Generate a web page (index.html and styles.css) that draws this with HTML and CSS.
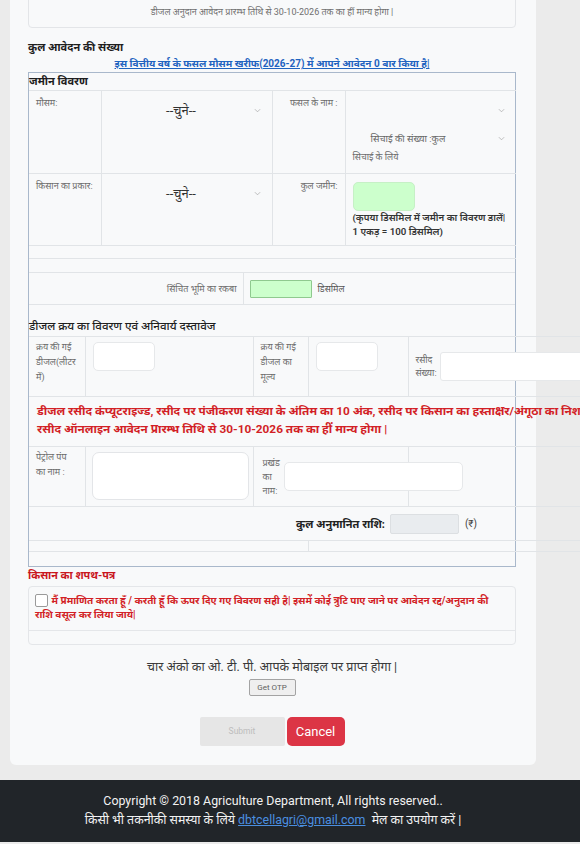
FILE: index.html
```html
<!DOCTYPE html>
<html lang="hi">
<head>
<meta charset="utf-8">
<title>डीजल अनुदान आवेदन</title>
<link rel="stylesheet" href="styles.css">
</head>
<body>
<main class="card">
  <div class="notice">डीजल अनुदान आवेदन प्रारम्भ तिथि से 30-10-2026 तक का हीं मान्य होगा |</div>

  <h4 class="count-title">कुल आवेदन की संख्या</h4>
  <p class="count-link"><a href="#">इस वित्तीय वर्ष के फसल मौसम खरीफ(2026-27) में आपने आवेदन 0 बार किया है|</a></p>

  <section class="land-box">
    <h5 class="sec-title">जमीन विवरण</h5>
    <table class="grid land">
      <colgroup><col class="c-lbl"><col class="c-val"><col class="c-lbl2"><col class="c-val"></colgroup>
      <tr class="r-season">
        <td class="lbl">मौसम:</td>
        <td class="sel-cell">
          <div class="select big"><span>--चुने--</span><svg class="chev" viewBox="0 0 8 5"><path d="M1 1l3 3 3-3"/></svg></div>
        </td>
        <td class="lbl right">फसल के नाम :</td>
        <td class="sel-cell">
          <div class="select big"><span></span><svg class="chev" viewBox="0 0 8 5"><path d="M1 1l3 3 3-3"/></svg></div>
          <div class="select small"><span>सिचाई की संख्या :कुल</span><svg class="chev" viewBox="0 0 8 5"><path d="M1 1l3 3 3-3"/></svg></div>
          <div class="hint">सिचाई के लिये</div>
        </td>
      </tr>
      <tr class="r-farmer">
        <td class="lbl">किसान का प्रकार:</td>
        <td class="sel-cell">
          <div class="select big"><span>--चुने--</span><svg class="chev" viewBox="0 0 8 5"><path d="M1 1l3 3 3-3"/></svg></div>
        </td>
        <td class="lbl right">कुल जमीन:</td>
        <td class="land-cell">
          <input class="green-in tall" type="text">
          <p class="land-note">(कृपया डिसमिल में जमीन का विवरण डालें|<br>1 एकड़ = 100 डिसमिल)</p>
        </td>
      </tr>
      <tr class="blank"><td colspan="4"></td></tr>
    </table>

    <table class="grid irrig">
      <colgroup><col class="c-irr"><col></colgroup>
      <tr class="blank b2"><td colspan="2"></td></tr>
      <tr class="r-irr">
        <td class="lbl right mid">सिंचित भूमि का रकबा</td>
        <td class="mid"><div class="inline-field"><input class="green-in short" type="text"><span class="unit">डिसमिल</span></div></td>
      </tr>
    </table>

    <h5 class="sec-title plain">डीजल क्रय का विवरण एवं अनिवार्य दस्तावेज</h5>
    <table class="grid diesel">
      <colgroup><col class="d1"><col class="d2"><col class="d3"><col class="d4"><col class="d5"></colgroup>
      <tr class="r-buy">
        <td class="lbl lbl3">क्रय की गई डीजल(लीटर में)</td>
        <td class="in-cell"><input class="white-in" type="text"></td>
        <td class="lbl lbl3">क्रय की गई डीजल का मूल्य</td>
        <td class="in-cell"><input class="white-in" type="text"></td>
        <td class="mid"><div class="receipt"><span class="rc-lbl">रसीद संख्या:</span><input class="white-in wide" type="text"></div></td>
      </tr>
      <tr class="r-warn">
        <td colspan="5" class="warn">डीजल रसीद कंप्यूटराइज्ड, रसीद पर पंजीकरण संख्या के अंतिम का 10 अंक, रसीद पर किसान का हस्ताक्षर/अंगूठा का निशान अनिवार्य है तथा डीजल<br>रसीद ऑनलाइन आवेदन प्रारम्भ तिथि से 30-10-2026 तक का हीं मान्य होगा |</td>
      </tr>
      <tr class="r-pump">
        <td class="lbl lbl3 narrow">पेट्रोल पंप का नाम :</td>
        <td class="in-cell"><textarea class="pump-area"></textarea></td>
        <td colspan="2" class="mid"><div class="block-field"><span class="blk-lbl">प्रखंड का नाम:</span><input class="white-in blk-in" type="text"></div></td>
        <td></td>
      </tr>
      <tr class="r-total">
        <td colspan="5" class="mid">
          <div class="total"><span class="total-lbl">कुल अनुमानित राशि:</span><input class="grey-in" type="text" readonly><span class="rupee">(₹)</span></div>
        </td>
      </tr>
      <tr class="r-thin"><td colspan="3"></td><td colspan="2"></td></tr>
      <tr class="r-last"><td colspan="5"></td></tr>
    </table>
  </section>

  <h5 class="oath-title">किसान का शपथ-पत्र</h5>
  <div class="oath-box">
    <div class="oath-row"><label><input type="checkbox" class="chk"> मैं प्रमाणित करता हूँ / करती हूँ कि ऊपर दिए गए विवरण सही है| इसमें कोई त्रुटि पाए जाने पर आवेदन रद्द/अनुदान की राशि वसूल कर लिया जाये|</label></div>
    <div class="oath-empty"></div>
  </div>

  <p class="otp-text">चार अंको का ओ. टी. पी. आपके मोबाइल पर प्राप्त होगा |</p>
  <button class="otp-btn" type="button">Get OTP</button>

  <div class="actions">
    <button class="btn-submit" type="button" disabled>Submit</button>
    <button class="btn-cancel" type="button">Cancel</button>
  </div>
</main>

<footer class="footer">
  <div class="footer-inner">
    <p>Copyright © 2018 Agriculture Department, All rights reserved..</p>
    <p>किसी भी तकनीकी समस्या के लिये <a href="#">dbtcellagri@gmail.com</a>&nbsp; मेल का उपयोग करें |</p>
  </div>
</footer>
</body>
</html>
```

FILE: styles.css
```css
html, body {
  overflow-x: hidden;
}
body {
  margin: 0;
  background: #ebebeb;
  font-family: Roboto, "Noto Sans", sans-serif;
  color: #222;
}

.card {
  width: 526px;
  box-sizing: border-box;
  margin: -30px 0 0 10px;
  padding: 0 20px 19px 18px;
  background: #f8f9fa;
  border-radius: 0 0 6px 6px;
}

.notice {
  border: 1px solid #e3e5e8;
  border-radius: 4px;
  padding: 34px 8px 8px;
  text-align: center;
  font-size: 9px;
  line-height: 14px;
  color: #6f6f6f;
}

.count-title {
  margin: 12px 0 0;
  font-size: 11px;
  line-height: 16px;
  font-weight: 700;
  color: #1e1e1e;
}
.count-link {
  margin: 0;
  text-align: center;
  font-size: 10px;
  line-height: 16px;
  font-weight: 700;
}
.count-link a {
  color: #1f63c0;
  text-decoration: underline;
}

.land-box {
  border: 1px solid #a9b8cb;
}
.sec-title {
  margin: 0;
  font-size: 11px;
  line-height: 17px;
  font-weight: 700;
  color: #1e1e1e;
}
.sec-title.plain {
  font-size: 11.6px;
  font-weight: 500;
  margin: 13px 0 2px;
  line-height: 16px;
}

.grid {
  border-collapse: collapse;
  table-layout: fixed;
  width: 100%;
}
.grid td {
  border: 1px solid #e1e4e7;
  vertical-align: top;
  padding: 0;
}
.grid tr td:first-child { border-left: none; }
.grid tr td:last-child { border-right: none; }

.c-lbl { width: 72px; }
.c-lbl2 { width: 73px; }
.c-val { width: 171px; }
.c-irr { width: 214px; }

.lbl {
  font-size: 9px;
  line-height: 14px;
  color: #6b6b6b;
  padding: 5px 7px 0 7px !important;
}
.lbl.right { text-align: right; }
.grid td.mid { vertical-align: middle; }

.sel-cell { padding: 3px 7px 9px !important; }
.select {
  display: flex;
  align-items: center;
  color: #333;
}
.select.big {
  height: 32px;
  font-size: 13px;
}
.select.big span {
  flex: 1;
  text-align: center;
}
.select.small {
  height: 24px;
  font-size: 9.5px;
  color: #666;
  padding-left: 18px;
}
.select.small span { flex: 1; }
.chev {
  width: 7px;
  height: 5px;
  margin-right: 4px;
  fill: none;
  stroke: #a5a5a5;
  stroke-width: 0.8;
}
.hint {
  font-size: 9px;
  line-height: 14px;
  color: #6b6b6b;
}

.land-cell { padding: 8px 7px 6px !important; }
.green-in {
  display: block;
  box-sizing: border-box;
  background: #ccffcc;
  border: 1px solid #c6f0c6;
  border-radius: 5px;
  padding: 0;
}
.green-in.tall { width: 62px; height: 29px; }
.green-in.short {
  width: 62px;
  height: 18px;
  border-radius: 1px;
  border: 1px solid #8fc98f;
}
.land-note {
  margin: 0;
  font-size: 9.7px;
  line-height: 14px;
  font-weight: 600;
  color: #333;
}

.blank td { height: 12px; }
.b2 td { border-top: none; height: 13px; }
.r-irr { height: 32px; }
.r-irr .lbl { padding: 0 6px 0 0 !important; }
.inline-field {
  display: flex;
  align-items: center;
  gap: 6px;
  padding-left: 6px;
}
.unit { font-size: 9px; color: #555; }

/* diesel */
.diesel { width: 671px; }
.d1 { width: 56px; }
.d2 { width: 168px; }
.d3 { width: 55px; }
.d4 { width: 100px; }
.d5 { width: 292px; }

.lbl3 {
  line-height: 15px !important;
  padding: 3px 6px 0 7px !important;
}
.lbl3.narrow { padding-right: 10px !important; }
.r-buy { height: 60px; }
.in-cell { padding: 5px 7px 0 !important; }
.white-in {
  display: block;
  box-sizing: border-box;
  width: 62px;
  height: 29px;
  background: #fff;
  border: 1px solid #e6e8ea;
  border-radius: 5px;
  padding: 0;
}
.receipt {
  display: flex;
  align-items: center;
  padding-left: 7px;
}
.rc-lbl {
  width: 24px;
  font-size: 9px;
  line-height: 13px;
  color: #6b6b6b;
}
.white-in.wide {
  width: 240px;
  border-radius: 3px;
}

.r-warn { height: 50px; }
.warn {
  padding: 5px 8px 0 !important;
  vertical-align: top;
  white-space: nowrap;
  font-size: 11.8px;
  line-height: 18px;
  font-weight: 700;
  color: #d21f26;
}

.r-pump { height: 60px; }
.pump-area {
  display: block;
  box-sizing: border-box;
  width: 157px;
  height: 48px;
  margin-left: -1px;
  background: #fff;
  border: 1px solid #e3e5e8;
  border-radius: 7px;
  resize: none;
}
.block-field {
  display: flex;
  align-items: center;
  padding: 0 7px 0 9px;
}
.blk-lbl {
  width: 21px;
  flex: none;
  font-size: 9px;
  line-height: 14px;
  color: #6b6b6b;
}
.white-in.blk-in {
  flex: 1;
  width: auto;
}

.r-total { height: 34px; }
.total {
  width: 487px;
  box-sizing: border-box;
  padding-right: 39px;
  display: flex;
  justify-content: flex-end;
  align-items: center;
}
.total-lbl {
  font-size: 11px;
  font-weight: 700;
  color: #222;
  margin-right: 5px;
}
.grey-in {
  box-sizing: border-box;
  width: 69px;
  height: 20px;
  background: #e9ecef;
  border: 1px solid #dcdfe2;
  border-radius: 2px;
  padding: 0;
}
.rupee {
  font-size: 10px;
  color: #444;
  margin-left: 6px;
}
.r-thin { height: 11px; }
.r-last { height: 14px; }
.r-last td { border-bottom: none; }

/* oath */
.oath-title {
  margin: 1px 0 2px;
  font-size: 10.8px;
  line-height: 16px;
  font-weight: 700;
  color: #c9161d;
}
.oath-box {
  border: 1px solid #e4e6e9;
  border-radius: 4px;
}
.oath-row {
  padding: 7px 10px 8px 6px;
  border-bottom: 1px solid #e4e6e9;
  font-size: 10px;
  line-height: 14px;
  font-weight: 700;
  color: #d21f26;
}
.chk {
  appearance: none;
  -webkit-appearance: none;
  width: 13px;
  height: 13px;
  margin: 0 1px 0 0;
  vertical-align: -3px;
  background: #fff;
  border: 1px solid #9a9a9a;
  border-radius: 2px;
}
.oath-empty { height: 13px; }

.otp-text {
  margin: 14px 0 0;
  text-align: center;
  font-size: 12.5px;
  line-height: 16px;
  color: #3a3a3a;
}
.otp-btn {
  display: block;
  margin: 4px auto 0;
  width: 47px;
  height: 17px;
  padding: 0;
  font-family: Roboto, sans-serif;
  font-size: 8px;
  color: #5f5f5f;
  background: #efefef;
  border: 1px solid #a3a3a3;
  border-radius: 2px;
}

.actions {
  display: flex;
  justify-content: center;
  gap: 2px;
  margin-top: 21px;
}
.btn-submit {
  width: 85px;
  height: 29px;
  border: none;
  background: #e6e6e6;
  color: #bdbdbd;
  font-family: Roboto, sans-serif;
  font-size: 8.5px;
  border-radius: 2px;
}
.btn-cancel {
  width: 58px;
  height: 29px;
  border: none;
  background: #dc3545;
  color: #fff;
  font-family: Roboto, sans-serif;
  font-size: 13px;
  border-radius: 5px;
}

.footer {
  margin-top: 15px;
  background: #212529;
}
.footer-inner {
  width: 526px;
  margin-left: 10px;
  padding: 11px 0 13px;
  text-align: center;
  color: #f2f2f2;
  font-size: 12.4px;
  line-height: 19px;
}
.footer-inner p { margin: 0; }
.footer-inner a { color: #4a8fe0; text-decoration: underline; }
```
